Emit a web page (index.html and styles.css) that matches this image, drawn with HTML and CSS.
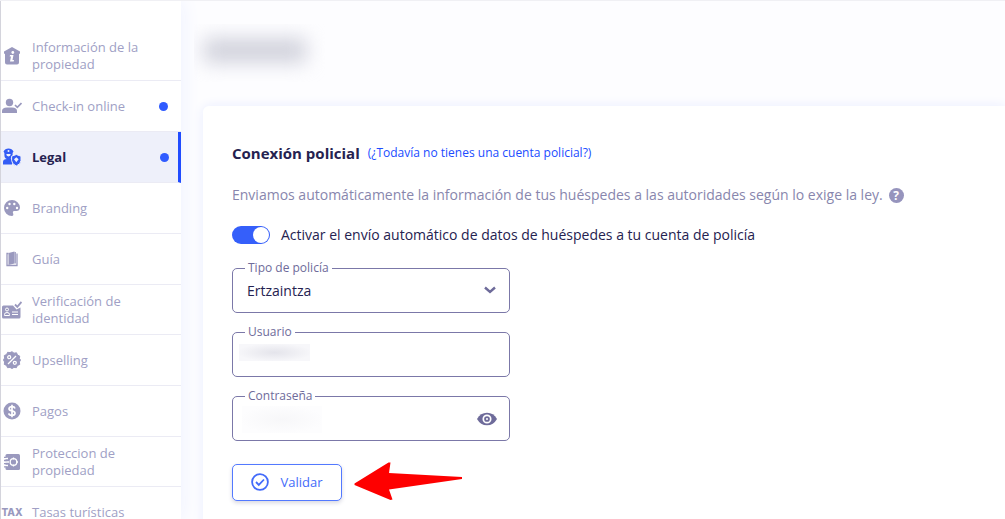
FILE: index.html
```html
<!DOCTYPE html>
<html lang="es">
<head>
<meta charset="utf-8">
<meta name="viewport" content="width=device-width, initial-scale=1">
<title>Legal</title>
<link rel="stylesheet" href="styles.css">
</head>
<body>
<div class="layout">
  <nav class="sidebar" aria-label="Secciones">
    <a class="item item--tall" href="#info">
      <span class="item-icon"><svg width="16" height="18" viewBox="0 0 16 18"><path fill="currentColor" d="M8 0 16 4.500v2L15 7v8.500q0 2-2 2H3q-2 0-2-2V7L0 6.500v-2z"/><g fill="#fff"><circle cx="8.800" cy="5.500" r="1.400"/><path d="M6 8h3.500L8.500 13H10l-.3 1.500H6L7 9.500H5.700z"/></g></svg></span>
      <span class="item-label">Información de la propiedad</span>
    </a>
    <a class="item" href="#checkin">
      <span class="item-icon"><svg width="20" height="16" viewBox="0 0 20 16"><g fill="currentColor"><circle cx="7.500" cy="4.500" r="3.700"/><path d="M0 15v-2q0-3.500 5-3.500h5q5 0 5 3.500v2z"/></g><path d="m13 7 2.300 2.300L19.500 5" fill="none" stroke="currentColor" stroke-width="1.700"/></svg></span>
      <span class="item-label">Check-in online</span><span class="dot"></span>
    </a>
    <a class="item item--active" href="#legal" aria-current="page">
      <span class="item-icon"><svg width="18" height="18" viewBox="0 0 18 18"><g fill="currentColor"><path d="M.5 3.500Q2 .5 5.500.5t5 3L9.600 5v2.200a4 4 0 0 1-8.200 0V5z"/><path d="M0 16.500V14q0-3 4-3h5v5.500z"/><path stroke="#eef0fa" d="m13.300 6.500 4.700 1.700v4.200q0 3.600-4.700 5.600-4.700-2-4.700-5.600V8.200z"/></g><g fill="#eef0fa"><circle cx="5.500" cy="3" r="1"/><path d="M3.300 6h4.400q0 2.400-2.200 2.400T3.300 6zM13.300 9.300l2.300 2-2.300 3-2.300-3z"/></g></svg></span>
      <span class="item-label">Legal</span><span class="dot"></span>
    </a>
    <a class="item" href="#branding">
      <span class="item-icon"><svg width="16" height="16" viewBox="0 0 16 16"><path fill="currentColor" d="M8 0a8 8 0 0 1 8 7.500c0 2.500-1.800 3.500-3.500 3.500h-2c-1.500 0-1.900 1-1.500 2s.8 3-1 3A8 8 0 0 1 8 0z"/><g fill="#fff"><circle cx="3.200" cy="8" r="1.200"/><circle cx="5.500" cy="4" r="1.200"/><circle cx="10.300" cy="4" r="1.200"/><circle cx="13" cy="8" r="1.200"/></g></svg></span>
      <span class="item-label">Branding</span>
    </a>
    <a class="item" href="#guia">
      <span class="item-icon"><svg width="14" height="16" viewBox="0 0 14 16"><path fill="currentColor" d="M3.500 2 9.500.5v12L3.500 14z"/><path d="M3.500 2.500H2v12h7.500M12 2.500v12H9.500M10.200 1v11.500" fill="none" stroke="currentColor" stroke-width="1.300"/></svg></span>
      <span class="item-label">Guía</span>
    </a>
    <a class="item item--tall" href="#verificacion">
      <span class="item-icon"><svg width="20" height="18" viewBox="0 0 20 18"><path fill="currentColor" d="M1.500 4.500H11l3.500 4 4-2V16q0 1.500-1.500 1.500H1.500Q0 17.500 0 16V6q0-1.500 1.500-1.500z"/><path d="m13 3.500 2.300 2.300L19.500 1" fill="none" stroke="currentColor" stroke-width="1.900"/><g fill="none" stroke="#fff"><circle cx="5" cy="8.500" r="1.500"/><path d="M2.500 14.500v-1q0-2 2.500-2t2.500 2v1zM10 11h6M10 13.500h6"/></g></svg></span>
      <span class="item-label">Verificación de identidad</span>
    </a>
    <a class="item" href="#upselling">
      <span class="item-icon"><svg width="18" height="18" viewBox="0 0 18 18"><path fill="currentColor" stroke="currentColor" stroke-linejoin="round" d="m9 .7 2 1.500 2.500-.4 1 2.300 2.200 1-.3 2.400L17.500 9l-1.100 2 .3 2.500-2.300 1-1 2.200-2.400-.3L9 17.500l-2-1.100-2.500.3-1-2.300-2.200-1 .3-2.400L.5 9l1.100-2-.3-2.500 2.300-1 1-2.200 2.400.3z"/><g fill="none" stroke="#fff" stroke-width="1.300"><path d="m5 13 8-8"/><circle cx="6.200" cy="6.200" r="1.500"/><circle cx="11.800" cy="11.800" r="1.500"/></g></svg></span>
      <span class="item-label">Upselling</span>
    </a>
    <a class="item" href="#pagos">
      <span class="item-icon"><svg width="18" height="18" viewBox="0 0 18 18"><circle cx="9" cy="9" r="8.500" fill="currentColor"/><path d="M12 6.500Q11.500 4.700 9 4.700T6 6.700q0 1.600 3 2.200t3 2.400q0 2-3 2t-3.200-2M9 2.700v12.600" fill="none" stroke="#fff" stroke-width="1.700"/></svg></span>
      <span class="item-label">Pagos</span>
    </a>
    <a class="item item--tall" href="#proteccion">
      <span class="item-icon"><svg width="16" height="16" viewBox="0 0 16 16"><path fill="currentColor" d="M3 0h11.500Q16 0 16 1.500v13q0 1.500-1.500 1.500H3q-1.500 0-1.500-1.500v-13Q1.500 0 3 0z"/><g fill="none" stroke="#fff" stroke-width="1.300"><circle cx="9.500" cy="8" r="3.300"/><path d="M9.500 3.500v2M9.500 10.500v2M12 8h2M1 4.500h3M1 8h4M1 11.500h3"/></g><path d="M0 3.300h2.500M0 6.500h2.500M0 9.700h2.500M0 12.900h2.500" stroke="currentColor" stroke-width="1.300"/></svg></span>
      <span class="item-label">Proteccion de propiedad</span>
    </a>
    <a class="item" href="#tasas">
      <span class="item-icon item-icon--text">TAX</span>
      <span class="item-label">Tasas turísticas</span>
    </a>
  </nav>
  <main class="main">
    <header class="header"><div class="redacted redacted--title"></div></header>
    <section class="card">
      <div class="heading">
        <h1 class="title">Conexión policial</h1>
        <a class="help-link" href="#cuenta">(¿Todavía no tienes una cuenta policial?)</a>
      </div>
      <p class="intro">Enviamos automáticamente la información de tus huéspedes a las autoridades según lo exige la ley.
        <button class="help" type="button" aria-label="Ayuda">?</button></p>
      <label class="switch"><input class="switch-input" type="checkbox" role="switch" checked><span>Activar el envío automático de datos de huéspedes a tu cuenta de policía</span></label>
      <form class="form">
        <div class="field">
          <label class="field-label" for="tipo">Tipo de policía</label>
          <select class="control" id="tipo"><option>Ertzaintza</option></select>
          <svg class="field-icon field-icon--arrow" width="12" height="8" viewBox="0 0 12 8"><path d="m1 1.500 5 4.500 5-4.500" fill="none" stroke="currentColor" stroke-width="2.400"/></svg>
        </div>
        <div class="field">
          <label class="field-label" for="usuario">Usuario</label>
          <input class="control" id="usuario" type="text">
          <div class="redacted redacted--user"></div>
        </div>
        <div class="field">
          <label class="field-label" for="clave">Contraseña</label>
          <input class="control" id="clave" type="password">
          <div class="redacted redacted--password"></div>
          <button class="field-icon field-icon--eye" type="button" aria-label="Mostrar contraseña"><svg width="20" height="14" viewBox="0 0 20 14"><path fill="currentColor" d="M0 7Q3.500.7 10 .7T20 7q-3.500 6.300-10 6.300T0 7z"/><circle cx="10" cy="7" r="3.700" fill="currentColor" stroke="#fff" stroke-width="1.700"/><circle cx="10" cy="7" r="1" fill="#fff"/></svg></button>
        </div>
        <div class="actions">
          <button class="validate" type="button"><svg width="18" height="18" viewBox="0 0 18 18" fill="none" stroke="currentColor" stroke-width="1.800"><circle cx="9" cy="9" r="7.900"/><path d="m5 9 2.800 2.900L13 6.500"/></svg>Validar</button>
          <svg class="arrow" width="109" height="40" viewBox="0 0 109 40"><path fill="#fe0000" d="M.5 21.500 34.500.5h2l-1.500 10.500L108 15v2L35 27.500 38.500 37.500l-2 .5L.5 23z"/></svg>
        </div>
      </form>
    </section>
  </main>
</div>
</body>
</html>
```
FILE: styles.css
```css
* { box-sizing: border-box; }

body {
  margin: 0;
  font-family: "Open Sans", "Noto Sans", sans-serif;
  font-size: 14px;
  color: #252250;
  background: #fdfdff;
}

button, input, select { font: inherit; color: inherit; }

.layout {
  display: flex;
  height: 100vh;
  overflow: hidden;
  border-top: 1px solid #f0f0f4;
}

.sidebar {
  flex: 0 0 181px;
  padding-top: 30px;
  border-left: 1px solid #d4d4dc;
  background: #fff;
  box-shadow: 0 0 20px #edf0ff;
  font-size: 13px;
}

.item {
  display: flex;
  align-items: center;
  height: 51px;
  padding-right: 13px;
  border-bottom: 1px solid #ebebf4;
  color: #a09fc5;
  font-weight: 500;
  line-height: 17px;
  text-decoration: none;
}

.item--tall { height: 50px; }

.item-icon {
  display: grid;
  place-items: center;
  flex: 0 0 22px;
  margin-right: 9px;
  color: #9a99be;
}

.item-icon--text {
  font-family: Inter, sans-serif;
  font-size: 10px;
  font-weight: 800;
}

.item-label { flex: 1; }

.item--tall .item-label { padding-right: 22px; }

.item--active {
  padding-right: 9px;
  border-right: 3px solid #204cff;
  background: #eef0fa;
  color: #252250;
  font-weight: 700;
}

.item--active .item-icon { color: #335cf5; }

.dot {
  width: 9px;
  height: 9px;
  border-radius: 50%;
  background: #2f5bff;
}

.main {
  flex: 1;
  min-width: 0;
  padding-left: 22px;
}

.header {
  height: 105px;
  padding-top: 23px;
}

.redacted { pointer-events: none; }

.redacted--title {
  display: grid;
  width: 140px;
  height: 58px;
  margin-left: -9px;
  padding: 15px 28px 20px 10px;
  overflow: hidden;
}

.redacted--title::before {
  content: "";
  background: #cdced9;
  filter: blur(10px);
}

.card {
  min-height: 100%;
  padding: 37px 29px;
  border-radius: 6px 0 0 0;
  background: #fff;
  box-shadow: 0 0 12px #e9edff;
}

.heading {
  display: flex;
  align-items: center;
  gap: 8px;
  line-height: 20px;
}

.title {
  margin: 0;
  font-size: 15px;
  font-weight: 700;
}

.help-link {
  color: #204cff;
  font-size: 12px;
  font-weight: 500;
  text-decoration: none;
}

.intro {
  display: flex;
  align-items: center;
  gap: 6px;
  margin: 22px 0 0;
  color: #8886ad;
  line-height: 20px;
}

.help {
  width: 15px;
  height: 15px;
  padding: 0;
  border: 0;
  border-radius: 50%;
  background: #9694bd;
  color: #fff;
  font-size: 12px;
  font-weight: 700;
  line-height: 15px;
}

.switch {
  display: flex;
  align-items: center;
  gap: 11px;
  margin-top: 20px;
  line-height: 20px;
}

.switch-input {
  appearance: none;
  display: flex;
  justify-content: flex-end;
  width: 38px;
  height: 18px;
  margin: 0;
  padding: 1px;
  border-radius: 9px;
  background: #355ffa;
}

.switch-input::before {
  content: "";
  width: 16px;
  height: 16px;
  border-radius: 50%;
  background: #fff;
}

.form {
  display: grid;
  gap: 19px;
  max-width: 278px;
  margin-top: 23px;
}

.field {
  position: relative;
  color: #6e6b9a;
}

.control {
  display: block;
  appearance: none;
  width: 100%;
  height: 45px;
  padding: 0 14px;
  border: 1px solid #7b78a8;
  border-radius: 5px;
  background: #fff;
  color: #252250;
}

.field-label {
  position: absolute;
  top: -8px;
  left: 13px;
  padding: 0 3px;
  background: #fff;
  font-size: 12px;
  line-height: 16px;
}

.field-icon {
  position: absolute;
  color: #6e6b9a;
}

.field-icon--arrow { top: 18px; right: 14px; }

.field-icon--eye {
  display: flex;
  top: 16px;
  right: 13px;
  padding: 0;
  border: 0;
  background: none;
}

.field .redacted { position: absolute; }

.redacted--user {
  top: 12px;
  left: 7px;
  width: 71px;
  height: 17px;
  background: radial-gradient(ellipse at center, #e4e4eb, #f7f7fa 75%);
}

.redacted--password {
  top: 10px;
  left: 10px;
  width: 80px;
  height: 27px;
  background: radial-gradient(ellipse at center, #f7f7f9, #fdfdfe 75%);
}

.actions {
  display: flex;
  align-items: center;
  gap: 12px;
  margin-top: 2px;
}

.validate {
  display: flex;
  flex: none;
  align-items: center;
  justify-content: center;
  gap: 11px;
  width: 110px;
  height: 37px;
  padding: 0;
  border: 1px solid #5379ff;
  border-radius: 5px;
  background: #fff;
  box-shadow: 0 2px 4px #d8d8e2;
  color: #436bfa;
  font-size: 13px;
  font-weight: 500;
}

.arrow { flex: none; }
```
